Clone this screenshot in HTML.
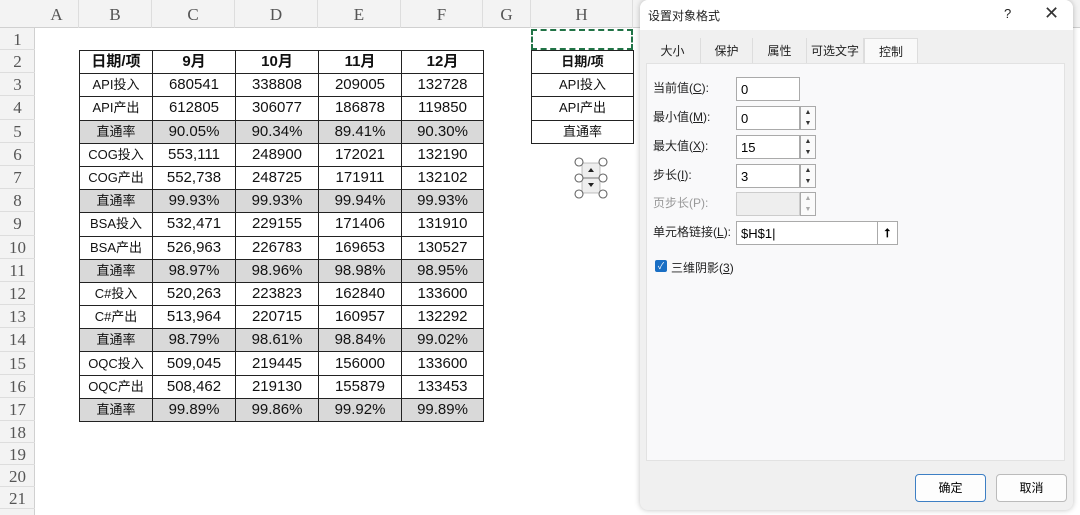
<!DOCTYPE html>
<html><head><meta charset="utf-8"><style>
*{margin:0;padding:0;box-sizing:border-box}
body{width:1080px;height:515px;overflow:hidden;background:#fff;font-family:"Liberation Sans","Noto Sans CJK SC",sans-serif;position:relative}
.a{position:absolute}
.colh{top:0;height:28px;background:#f3f3f3;border-bottom:1px solid #d0d0d0;width:1080px;left:0}
.ch{position:absolute;top:0;height:28px;line-height:30px;text-align:center;font-family:"Liberation Serif",serif;font-size:17px;color:#555;border-right:1px solid #ddd}
.rowh{left:0;top:28px;width:35px;height:487px;background:#f3f3f3;border-right:1px solid #d0d0d0}
.rh{position:absolute;left:0;width:35px;text-align:center;font-family:"Liberation Serif",serif;font-size:17px;color:#555;border-bottom:1px solid #ddd}
table{border-collapse:collapse;position:absolute;table-layout:fixed}
td{border:1px solid #222;text-align:center;font-size:15px;color:#111;height:23.2px;padding:0;line-height:20px;overflow:hidden;white-space:nowrap}
tr.g td{background:#d9d9d9}
tr.h td{font-weight:bold}
td.l{font-size:13px}
.dlg{left:640px;top:0;width:433px;height:510px;background:#f0f0f0;border-radius:8px;box-shadow:0 0 6px rgba(0,0,0,.25)}
.lbl{position:absolute;left:6px;font-size:12px;color:#222}
.inp{position:absolute;left:89px;width:64px;height:24px;background:#fff;border:1px solid #aaa;font-size:13px;padding:4px 4px}
.sp{position:absolute;left:153px;width:16px;height:24px;border:1px solid #aaa;background:#fafafa;font-size:7px;line-height:11px;text-align:center;color:#333}
.tab{position:absolute;top:38px;height:26px;font-size:12px;line-height:26px;text-align:center;color:#222;border-right:1px solid #ddd}
.btn{position:absolute;top:474px;width:71px;height:28px;border:1px solid #bbb;border-radius:4px;background:#fdfdfd;font-size:12px;line-height:26px;text-align:center}
</style></head><body>
<div class="a colh"></div>
<div class="ch" style="left:35px;width:44px">A</div>
<div class="ch" style="left:79px;width:73px">B</div>
<div class="ch" style="left:152px;width:83px">C</div>
<div class="ch" style="left:235px;width:83px">D</div>
<div class="ch" style="left:318px;width:83px">E</div>
<div class="ch" style="left:401px;width:82px">F</div>
<div class="ch" style="left:483px;width:48px">G</div>
<div class="ch" style="left:531px;width:102px">H</div>
<div class="a rowh"></div>
<div class="rh" style="top:28px;height:22px;line-height:24px">1</div>
<div class="rh" style="top:50px;height:23.2px;line-height:24px">2</div>
<div class="rh" style="top:73.2px;height:23.2px;line-height:24px">3</div>
<div class="rh" style="top:96.4px;height:23.2px;line-height:24px">4</div>
<div class="rh" style="top:119.6px;height:23.2px;line-height:24px">5</div>
<div class="rh" style="top:142.8px;height:23.2px;line-height:24px">6</div>
<div class="rh" style="top:166px;height:23.2px;line-height:24px">7</div>
<div class="rh" style="top:189.2px;height:23.2px;line-height:24px">8</div>
<div class="rh" style="top:212.4px;height:23.2px;line-height:24px">9</div>
<div class="rh" style="top:235.6px;height:23.2px;line-height:24px">10</div>
<div class="rh" style="top:258.8px;height:23.2px;line-height:24px">11</div>
<div class="rh" style="top:282px;height:23.2px;line-height:24px">12</div>
<div class="rh" style="top:305.2px;height:23.2px;line-height:24px">13</div>
<div class="rh" style="top:328.4px;height:23.2px;line-height:24px">14</div>
<div class="rh" style="top:351.6px;height:23.2px;line-height:24px">15</div>
<div class="rh" style="top:374.8px;height:23.2px;line-height:24px">16</div>
<div class="rh" style="top:398px;height:23.2px;line-height:24px">17</div>
<div class="rh" style="top:421.2px;height:22px;line-height:24px">18</div>
<div class="rh" style="top:443.2px;height:22px;line-height:24px">19</div>
<div class="rh" style="top:465.2px;height:22px;line-height:24px">20</div>
<div class="rh" style="top:487.2px;height:22px;line-height:24px">21</div>

<table style="left:79px;top:50px;width:404px">
<colgroup><col style="width:73px"><col style="width:83px"><col style="width:83px"><col style="width:83px"><col style="width:82px"></colgroup>
<tr class="h"><td>日期/项</td><td>9月</td><td>10月</td><td>11月</td><td>12月</td></tr>
<tr><td class="l">API投入</td><td>680541</td><td>338808</td><td>209005</td><td>132728</td></tr>
<tr><td class="l">API产出</td><td>612805</td><td>306077</td><td>186878</td><td>119850</td></tr>
<tr class="g"><td class="l">直通率</td><td>90.05%</td><td>90.34%</td><td>89.41%</td><td>90.30%</td></tr>
<tr><td class="l">COG投入</td><td>553,111</td><td>248900</td><td>172021</td><td>132190</td></tr>
<tr><td class="l">COG产出</td><td>552,738</td><td>248725</td><td>171911</td><td>132102</td></tr>
<tr class="g"><td class="l">直通率</td><td>99.93%</td><td>99.93%</td><td>99.94%</td><td>99.93%</td></tr>
<tr><td class="l">BSA投入</td><td>532,471</td><td>229155</td><td>171406</td><td>131910</td></tr>
<tr><td class="l">BSA产出</td><td>526,963</td><td>226783</td><td>169653</td><td>130527</td></tr>
<tr class="g"><td class="l">直通率</td><td>98.97%</td><td>98.96%</td><td>98.98%</td><td>98.95%</td></tr>
<tr><td class="l">C#投入</td><td>520,263</td><td>223823</td><td>162840</td><td>133600</td></tr>
<tr><td class="l">C#产出</td><td>513,964</td><td>220715</td><td>160957</td><td>132292</td></tr>
<tr class="g"><td class="l">直通率</td><td>98.79%</td><td>98.61%</td><td>98.84%</td><td>99.02%</td></tr>
<tr><td class="l">OQC投入</td><td>509,045</td><td>219445</td><td>156000</td><td>133600</td></tr>
<tr><td class="l">OQC产出</td><td>508,462</td><td>219130</td><td>155879</td><td>133453</td></tr>
<tr class="g"><td class="l">直通率</td><td>99.89%</td><td>99.86%</td><td>99.92%</td><td>99.89%</td></tr>
</table>

<div class="a" style="left:531px;top:29px;width:102px;height:21px;border:2px dashed #217346"></div>
<table style="left:531px;top:50px;width:103px">
<tr class="h"><td style="font-size:13px">日期/项</td></tr>
<tr><td class="l">API投入</td></tr>
<tr><td class="l">API产出</td></tr>
<tr><td class="l">直通率</td></tr>
</table>

<svg class="a" style="left:574px;top:157px" width="34" height="42" viewBox="0 0 34 42">
<rect x="8" y="6" width="18" height="30" fill="#eee" stroke="#999" stroke-width=".6"/>
<line x1="8" y1="21" x2="26" y2="21" stroke="#777"/>
<path d="M14 15 L17 11 L20 15Z M14 26 L17 30 L20 26Z" fill="#222"/>
<g fill="#fff" stroke="#666" stroke-width="1.1">
<circle cx="5" cy="5" r="4"/><circle cx="29" cy="5" r="4"/><circle cx="5" cy="21" r="4"/><circle cx="29" cy="21" r="4"/><circle cx="5" cy="37" r="4"/><circle cx="29" cy="37" r="4"/></g>
</svg>

<div class="a dlg">
<div class="a" style="left:0;top:0;width:433px;height:30px;background:#fff;border-radius:8px 8px 0 0"></div>
<div class="a" style="left:8px;top:7px;font-size:12px;color:#222">设置对象格式</div>
<div class="a" style="left:364px;top:6px;font-size:13px;color:#222">?</div>
<div class="a" style="left:404px;top:3px;font-size:18px;color:#333">✕</div>
<div class="tab" style="left:5px;width:56px">大小</div>
<div class="tab" style="left:61px;width:52px">保护</div>
<div class="tab" style="left:113px;width:54px">属性</div>
<div class="tab" style="left:167px;width:57px">可选文字</div>
<div class="tab" style="left:224px;width:54px;background:#f9f9f9;border:1px solid #ddd;border-bottom:none;height:27px">控制</div>
<div class="a" style="left:6px;top:63px;width:419px;height:398px;background:#f9f9fa;border:1px solid #e2e2e2">
<div class="lbl" style="top:15px">当前值(<u>C</u>):</div>
<div class="inp" style="top:13px">0</div>
<div class="lbl" style="top:44px">最小值(<u>M</u>):</div>
<div class="inp" style="top:42px">0</div><div class="sp" style="top:42px">▲<br>▼</div>
<div class="lbl" style="top:73px">最大值(<u>X</u>):</div>
<div class="inp" style="top:71px">15</div><div class="sp" style="top:71px">▲<br>▼</div>
<div class="lbl" style="top:102px">步长(<u>I</u>):</div>
<div class="inp" style="top:100px">3</div><div class="sp" style="top:100px">▲<br>▼</div>
<div class="lbl" style="top:130px;color:#999">页步长(P):</div>
<div class="inp" style="top:128px;background:#eee;border-color:#ccc"></div><div class="sp" style="top:128px;color:#aaa">▲<br>▼</div>
<div class="lbl" style="top:159px">单元格链接(<u>L</u>):</div>
<div class="inp" style="top:157px;width:142px">$H$1|</div>
<div class="a" style="left:230px;top:157px;width:21px;height:24px;border:1px solid #aaa;background:#fff;text-align:center;font-size:12px;line-height:22px;font-weight:bold">⭡</div>
<div class="a" style="left:8px;top:196px;width:12px;height:12px;background:#1a6fc4;border-radius:2px;color:#fff;font-size:9px;line-height:12px;text-align:center">✓</div>
<div class="lbl" style="top:195px;left:24px">三维阴影(<u>3</u>)</div>
</div>
<div class="btn" style="left:275px;border-color:#3d7fc4">确定</div>
<div class="btn" style="left:356px">取消</div>
</div>
</body></html>
